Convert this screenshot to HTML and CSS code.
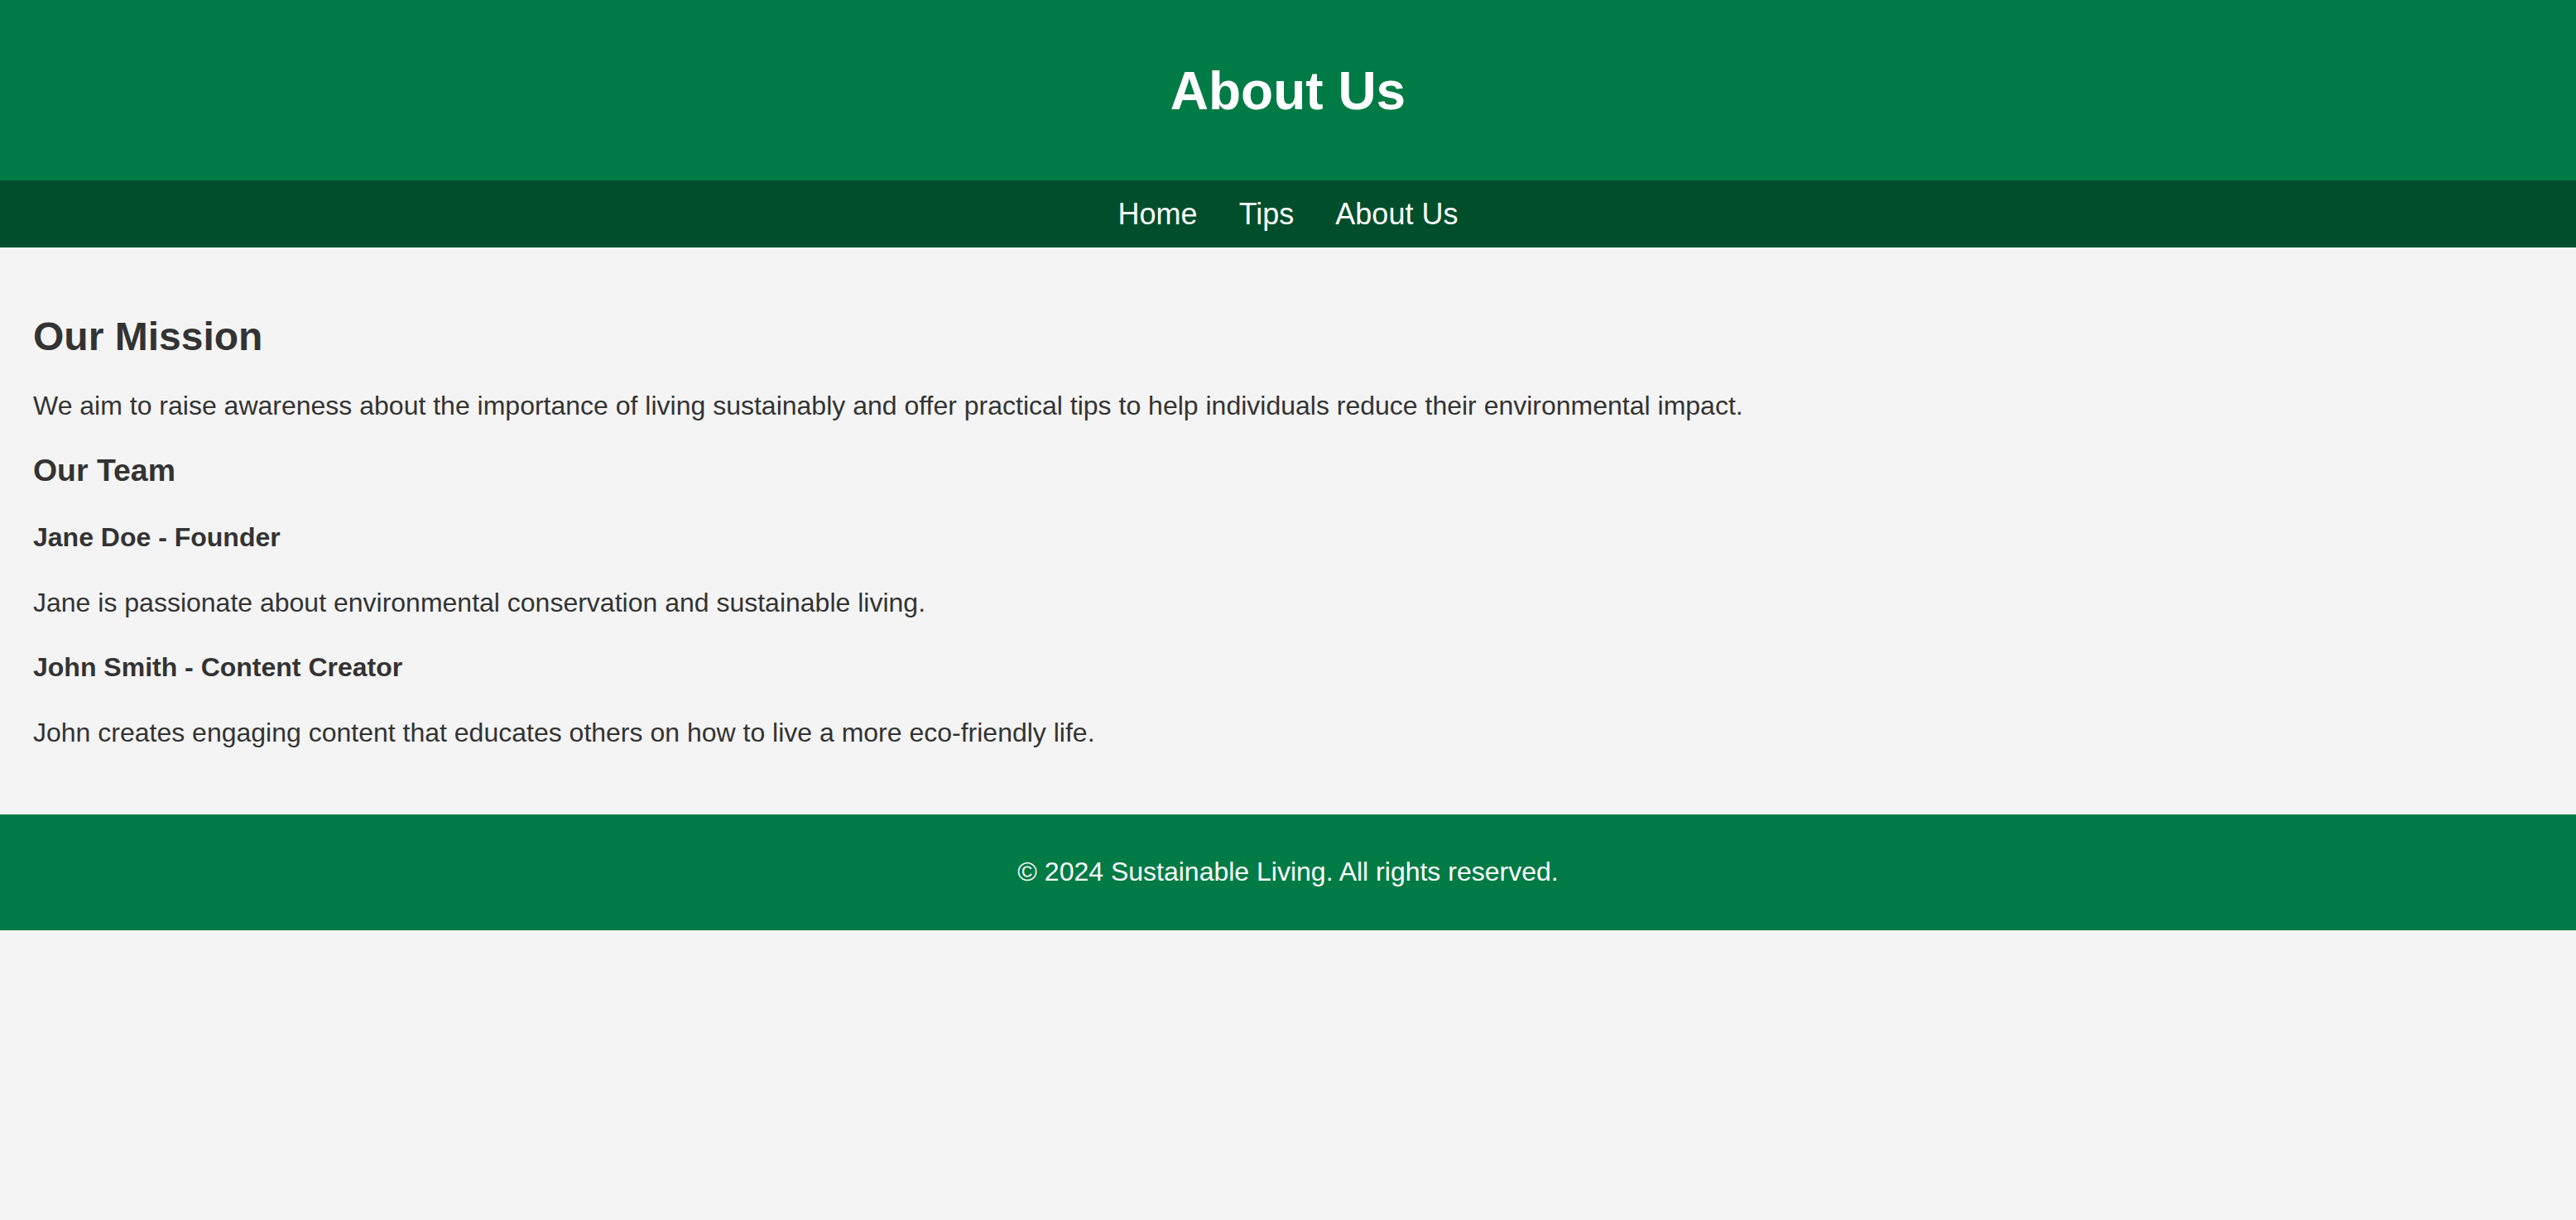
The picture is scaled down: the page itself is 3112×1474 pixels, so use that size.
FILE: index.html
```html
<!DOCTYPE html>
<html lang="en">
<head>
<meta charset="UTF-8">
<title>About Us - Sustainable Living</title>
<link rel="stylesheet" href="styles.css">
</head>
<body>
<header class="site-header">
  <h1 class="site-title">About Us</h1>
</header>
<nav class="site-nav">
  <a class="nav-link" href="#">Home</a>
  <a class="nav-link" href="#">Tips</a>
  <a class="nav-link" href="#">About Us</a>
</nav>
<main class="content">
  <h2 class="section-title">Our Mission</h2>
  <p class="text">We aim to raise awareness about the importance of living sustainably and offer practical tips to help individuals reduce their environmental impact.</p>
  <h3 class="sub-title">Our Team</h3>
  <h4 class="member">Jane Doe - Founder</h4>
  <p class="text">Jane is passionate about environmental conservation and sustainable living.</p>
  <h4 class="member">John Smith - Content Creator</h4>
  <p class="text">John creates engaging content that educates others on how to live a more eco-friendly life.</p>
</main>
<footer class="site-footer">
  <p class="footer-text">&copy; 2024 Sustainable Living. All rights reserved.</p>
</footer>
</body>
</html>
```

FILE: styles.css
```css
html, body {
  margin: 0;
  padding: 0;
}
body {
  font-family: "Liberation Sans", Arial, sans-serif;
  background: #f4f4f4;
  color: #333;
  font-size: 32px;
}
.site-header {
  background: #007b45;
  color: #fff;
  text-align: center;
  padding: 73px 0 71px;
}
.site-title {
  margin: 0;
  font-size: 64px;
  line-height: 74px;
  font-weight: bold;
}
.site-nav {
  background: #004e2b;
  text-align: center;
  padding: 20px 0;
  font-size: 36px;
  line-height: 41px;
}
.nav-link {
  color: #fff;
  text-decoration: none;
  margin: 0 20px;
}
.content {
  padding: 40px 40px 48px;
}
.section-title {
  font-size: 48px;
  line-height: 55px;
  margin: 40px 0 38px;
}
.sub-title {
  font-size: 37.44px;
  line-height: 43px;
  margin: 37.5px 0;
}
.member {
  font-size: 32px;
  line-height: 37px;
  margin: 41.5px 0;
}
.text {
  line-height: 37px;
  margin: 32px 0;
}
.site-footer {
  background: #007b45;
  color: #fff;
  text-align: center;
  padding: 51px 0 52px;
}
.footer-text {
  margin: 0;
  font-size: 32px;
  line-height: 37px;
}
```
